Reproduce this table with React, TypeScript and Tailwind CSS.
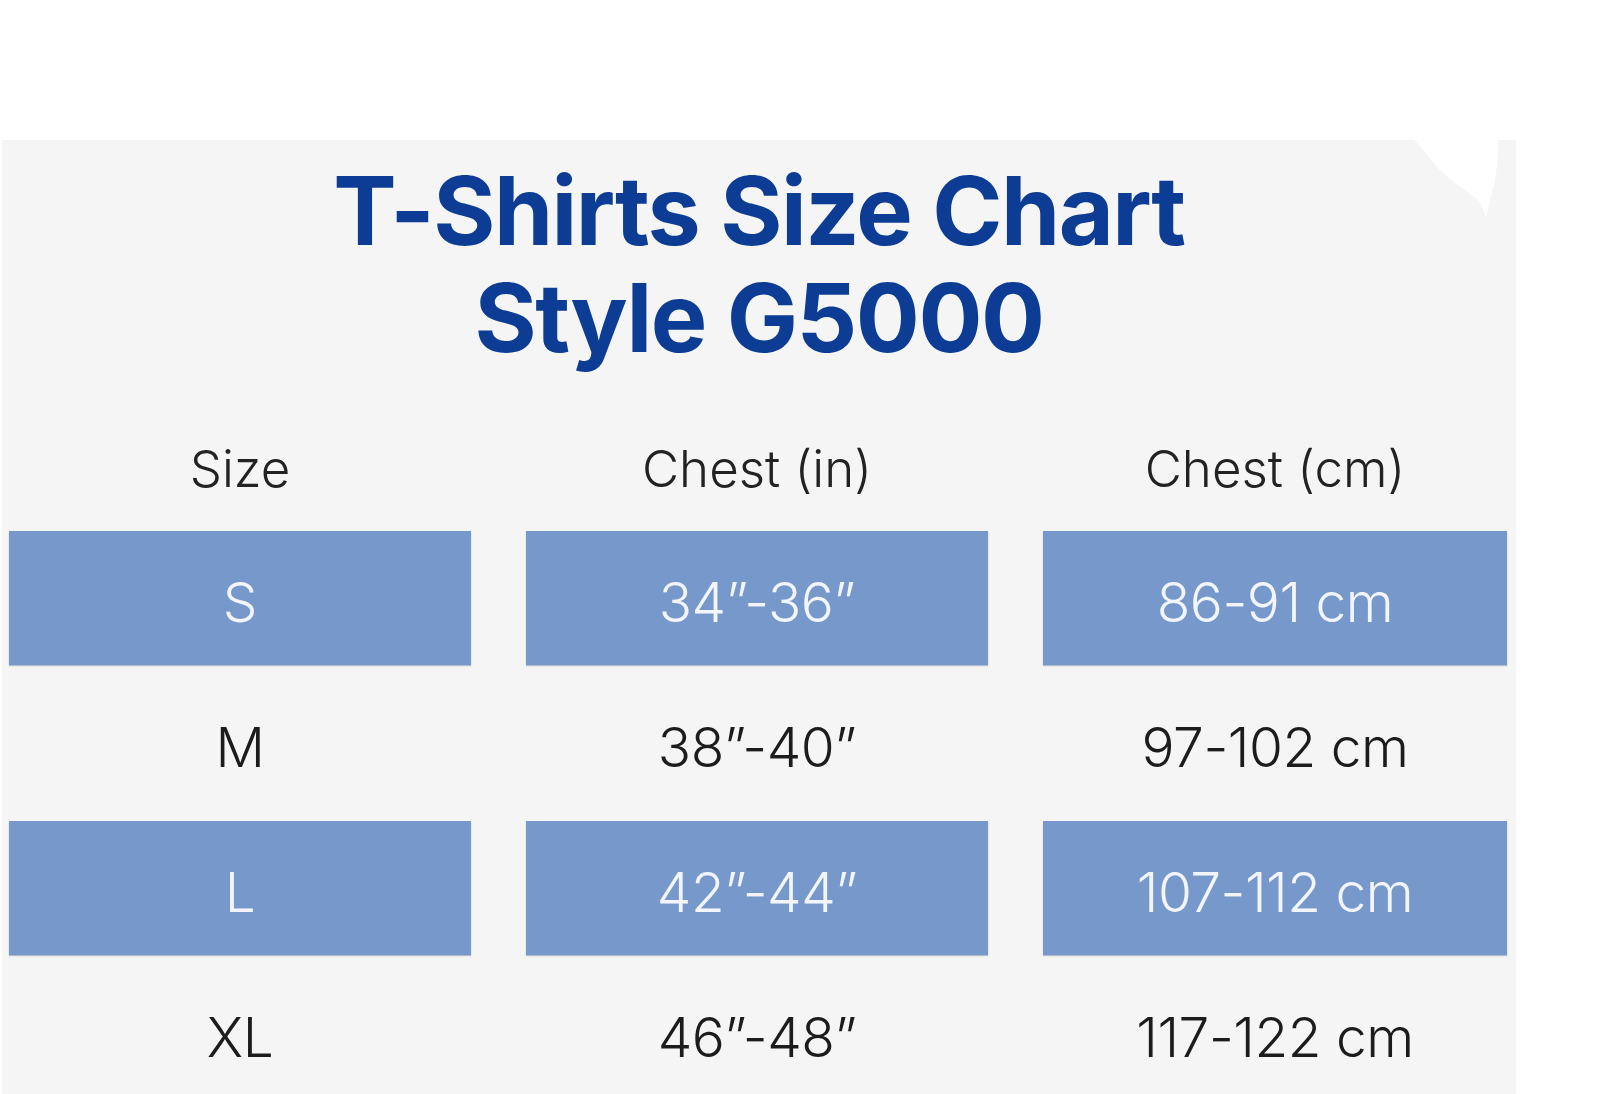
import React from "react";

const rows = [
  { size: "S", inch: "34”-36”", cm: "86-91 cm", hl: true },
  { size: "M", inch: "38”-40”", cm: "97-102 cm", hl: false },
  { size: "L", inch: "42”-44”", cm: "107-112 cm", hl: true },
  { size: "XL", inch: "46”-48”", cm: "117-122 cm", hl: false },
];

export default function App() {
  return (
    <div className="w-[1600px] h-[1094px] bg-white overflow-hidden" style={{ fontFamily: "Inter, 'Open Sans', sans-serif" }}>
      <div className="relative ml-[2px] mt-[140px] w-[1514px] h-[954px] bg-[#f5f5f5]">
        <svg className="absolute left-[1408px] top-0" width="90" height="80" viewBox="0 0 90 80">
          <path d="M4 0 C14 10 22 22 30 30 C40 40 55 50 66 58 C72 64 74 72 76 78 C78 70 80 60 82 52 C86 40 88 20 88 0 Z" fill="#ffffff" />
        </svg>
        <div className="pt-[17px] text-center text-[#0c3c94] font-bold text-[95px] leading-[107px] tracking-[-1.5px]">
          <div>T-Shirts Size Chart</div>
          <div>Style G5000</div>
        </div>
        <div className="mt-[68px] pl-[7px] grid grid-cols-[462px_462px_464px] gap-x-[55px] text-[#222222] font-light text-[51px] leading-[60px] text-center">
          <div>Size</div>
          <div>Chest (in)</div>
          <div>Chest (cm)</div>
        </div>
        <div className="mt-[32px] pl-[7px] flex flex-col">
          {rows.map((r) => (
            <div
              key={r.size}
              className={
                r.hl
                  ? "grid grid-cols-[462px_462px_464px] gap-x-[55px] h-[134px]"
                  : "grid grid-cols-[462px_462px_464px] gap-x-[55px] h-[156px]"
              }
            >
              {[r.size, r.inch, r.cm].map((t, i) => (
                <div
                  key={i}
                  className={
                    r.hl
                      ? "flex items-center justify-center pt-[8px] bg-[#7698cb] text-[#f2f5fb] font-light text-[55px] tracking-[-0.5px] shadow-[0_1px_1px_rgba(60,80,120,0.35)]"
                      : "flex items-center justify-center pt-[8px] text-[#1c1c1c] font-light text-[55px] tracking-[-0.5px]"
                  }
                >
                  {t}
                </div>
              ))}
            </div>
          ))}
        </div>
      </div>
    </div>
  );
}
